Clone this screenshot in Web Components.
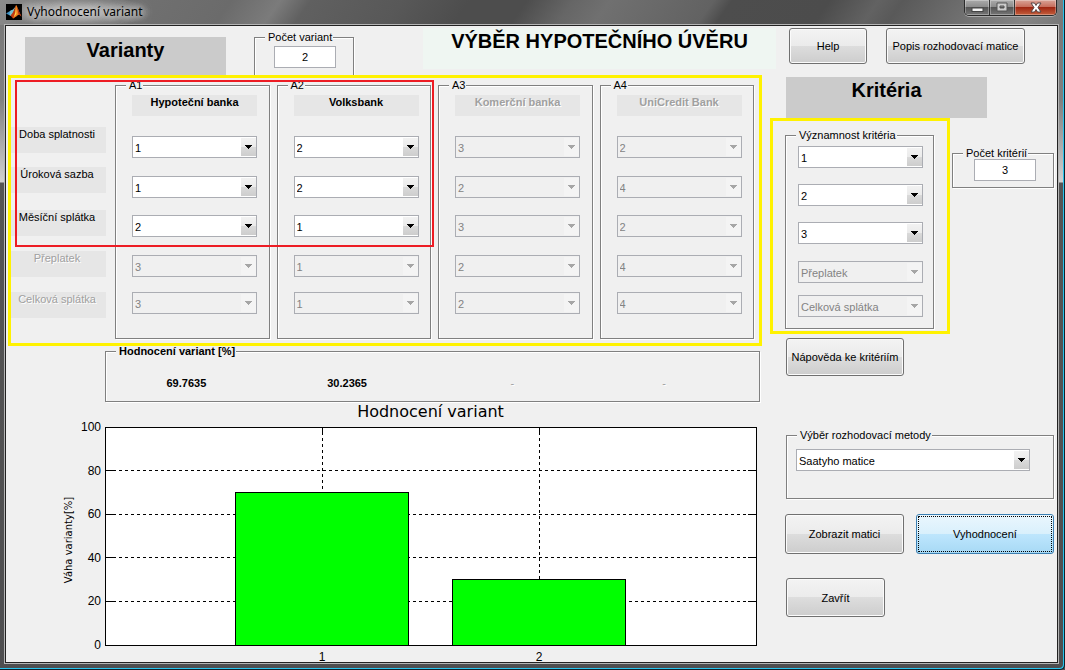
<!DOCTYPE html>
<html lang="cs">
<head>
<meta charset="utf-8">
<title>Vyhodnocení variant</title>
<style>
  html, body { margin: 0; }
  body { font: 11px/14px "Liberation Sans", Arial, sans-serif; color: #000; background: #555; }
</style>
</head>
<body>
<evaluation-app></evaluation-app>

<script>
const define = (name, html, setup) => {
  const template = document.createElement('template');
  template.innerHTML = html;
  customElements.define(name, class extends HTMLElement {
    constructor() {
      super();
      this.attachShadow({ mode: 'open' }).append(template.content.cloneNode(true));
    }
    connectedCallback() {
      if (setup && !this.ready) { this.ready = true; setup(this, this.shadowRoot); }
    }
  });
};

/* Window frame with title bar and caption buttons */
define('app-window', `
<style>
  :host { display: flex; flex-direction: column; box-sizing: border-box; min-height: 100vh; position: relative;
    padding: 0 7px 7px 5px;
    background: linear-gradient(180deg, #777 0, #808080 100px, #d0d0d0 182px, #555 183px, #4e4e50 100%); }
  :host::after { content: ""; position: absolute; inset: 0; pointer-events: none;
    border: solid #10202a; border-width: 0 1px 1px 0; box-shadow: inset -1px -1px 0 #28c4ee; border-radius: 0 0 5px 0; }
  header { display: flex; align-items: flex-start; height: 25px; margin: 0 -7px 0 -5px; padding: 0 8px 0 6px;
    background:
      radial-gradient(ellipse 75px 16px at 78px 12px, rgba(255,255,255,.55), rgba(255,255,255,0) 100%),
      linear-gradient(125deg, #8c8c8c 0, #747474 60px, #6b6b6b 190px, #7b7b7b 230px, #606060 255px, #585858 330px,
        #4d4d4d 385px, #4d4d4d 432px, #666 470px, #707070 500px, #626262 585px, #4d4d4d 600px, #4c4c4c 680px, #626262 720px, #595959 740px, #858585 850px, #777 100%); }
  .logo { width: 16px; height: 16px; margin-top: 4px; }
  h1 { flex: 1; margin: 3px 0 0 5px; font: 12px/18px "Noto Sans", "Open Sans", sans-serif;
    text-shadow: 0 0 6px #ddd, 0 0 9px #ccc, 0 0 12px #bbb; }
  nav { display: flex; border: 1px solid #2b2b2b; border-top: 0; border-radius: 0 0 5px 5px; overflow: hidden; box-shadow: 0 1px 0 #aaa; }
  nav button { display: grid; place-items: center; width: 25px; height: 15px; padding: 0; border: 0; border-right: 1px solid #333;
    background: linear-gradient(#aaa, #8b8b8b 48%, #555 50%, #777); box-shadow: inset 0 0 0 1px rgba(255,255,255,.3); }
  nav button:last-child { width: 41px; border: 0; background: linear-gradient(#d9a397, #c66b59 48%, #a02713 50%, #c45f3c); }
  main { flex: 1; background: #f0f0f0; border: 1px solid #222; box-shadow: 0 0 0 1px #b5b5b5; position: relative; }
</style>
<header>
  <svg class="logo" viewBox="0 0 16 16" aria-hidden="true">
    <rect width="16" height="16"/>
    <path d="M0 9.5 4 7l2-1 2 2-3 4-2-1z" fill="#3d8fc4"/>
    <path d="M4 7l3-1.5L10 2 7 9l-2 3-1.500-1z" fill="#7ac0cc"/>
    <path d="M10 1C8.500 5 7.500 9 4.500 11.500L7 14.500c1.500-.5 2.500-3 4-2.500z" fill="#c03a12"/>
    <path d="M10 1c1 0 2.500 6 5.500 11.500-2-2-3-2.500-4.500-.5L7 14.500 9 9z" fill="#ee7a1c"/>
    <path d="M10 2l.5 8L8 13l1.500-5z" fill="#ffd24a"/>
    <path d="M11 3l4.500 9.500-3-2.500z" fill="#a82a10"/>
  </svg>
  <h1><slot name="title"></slot></h1>
  <nav>
    <button aria-label="Minimalizovat"><svg width="13" height="11"><rect x="1" y="6" width="11" height="3.500" fill="#f2f2f2" stroke="#444"/></svg></button>
    <button aria-label="Maximalizovat"><svg width="12" height="11"><path d="M1 1h10v8H1zM4 4v2h4V4z" fill="#ccc" fill-rule="evenodd" stroke="#555"/></svg></button>
    <button aria-label="Zavřít okno"><svg width="14" height="12"><path d="M2 1h3.500L7 3.500 8.500 1H12L9 5.500 12 10H8.500L7 7.500 5.500 10H2L5 5.500z" fill="#fff" stroke="#544"/></svg></button>
  </nav>
</header>
<main><slot></slot></main>`);

/* Etched group box */
define('group-box', `
<style>
  :host { display: flex; min-width: 0; }
  fieldset { flex: 1; min-width: 0; margin: 0 1px 1px 0; padding: 0 10px; border: 1px solid #808080;
    box-shadow: 1px 1px 0 #fff, inset 1px 1px 0 #fff; }
  :host([open]) fieldset { border-bottom: 0; margin-bottom: 0; }
  legend { padding: 0 1px 0 3px; line-height: 12px; background: #f0f0f0; white-space: nowrap; }
  :host([strong]) legend { font-weight: bold; }
</style>
<fieldset><legend></legend><slot></slot></fieldset>`,
(el, root) => { root.querySelector('legend').textContent = el.getAttribute('label'); });

/* Drop-down list */
define('drop-down', `
<style>
  :host { display: block; position: relative; height: 22px; }
  select { appearance: none; display: block; box-sizing: border-box; width: 100%; height: 22px; margin: 0; padding: 2px 18px 0 2px;
    border: 1px solid #abadb3; border-radius: 0; background: #fff; color: #000; font: inherit; opacity: 1; outline: 0; }
  select:disabled { background: #f0f0f0; color: #838383; }
  span { position: absolute; top: 2px; right: 1px; width: 15px; height: 18px; display: grid; place-items: center; pointer-events: none;
    background: linear-gradient(#f2f2f2, #ebebeb 50%, #dadada 50%, #cdcdcd); }
  svg { fill: #000; }
  select:disabled + span { background: #f4f4f4; }
  select:disabled + span svg { fill: #a6a6a6; }
</style>
<select></select><span><svg width="7" height="4" shape-rendering="crispEdges"><path d="M0 0h7v1H6v1H5v1H4v1H3V3H2V2H1V1H0z"/></svg></span>`,
(el, root) => {
  const select = root.querySelector('select');
  select.add(new Option(el.getAttribute('value')));
  select.setAttribute('aria-label', el.getAttribute('label'));
  select.disabled = el.hasAttribute('disabled');
});

define('count-field', `
<style>
  :host { display: block; width: 62px; }
  input { display: block; box-sizing: border-box; width: 100%; height: 22px; margin: 0; padding: 0; border: 1px solid #abadb3;
    background: #fff; text-align: center; font: inherit; color: inherit; outline: 0; }
</style>
<input type="text">`,
(el, root) => {
  const input = root.querySelector('input');
  input.value = el.getAttribute('value');
  input.setAttribute('aria-label', el.getAttribute('label'));
});

define('push-button', `
<style>
  :host { display: block; }
  button { display: block; width: 100%; height: 100%; padding: 0; border: 1px solid #707070; border-radius: 3px; font: inherit; color: #000;
    white-space: nowrap; background: linear-gradient(#f3f3f3, #ebebeb 50%, #dddddd 50%, #cdcdcd); box-shadow: inset 0 0 0 1px #fbfbfb; }
  :host([default]) button { border-color: #3c7fb1; background: linear-gradient(#eaf6fd, #d9f0fc 49%, #bee6fd 50%, #a7d9f5);
    box-shadow: none; outline: 1px dotted #000; outline-offset: -3px; }
</style>
<button type="button"><slot></slot></button>`);

define('heading-block', `
<style>
  :host { display: block; background: #cbcbcb; text-align: center; }
  :host([tint]) { background: #eff6f2; }
  h2 { margin: 0; font-size: 20px; line-height: 26px; }
</style>
<h2><slot></slot></h2>`);

define('static-text', `
<style>
  :host { display: block; background: #e6e6e6; text-align: center; white-space: nowrap; }
  :host([disabled]) { color: #a0a0a0; text-shadow: 1px 1px 0 #fff; }
  :host([strong]) { font-weight: bold; }
</style>
<slot></slot>`);

/* One variant: bank name and a rating for each criterion */
define('variant-group', `
<style>
  :host { display: flex; min-width: 0; }
  group-box { flex: 1; }
  .body { display: grid; width: 125px; padding: 4px 0 0 6px; }
  static-text { height: 21px; margin-bottom: 20px; }
  .ratings { display: grid; grid-template-rows: 40px 39px 40px 37px 22px; }
</style>
<group-box><div class="body"><static-text strong></static-text><div class="ratings"></div></div></group-box>`,
(el, root) => {
  const name = el.getAttribute('name');
  const off = el.hasAttribute('disabled');
  const text = root.querySelector('static-text');
  text.textContent = name;
  text.toggleAttribute('disabled', off);
  const criteria = ['Doba splatnosti', 'Úroková sazba', 'Měsíční splátka', 'Přeplatek', 'Celková splátka'];
  root.querySelector('.ratings').innerHTML = el.getAttribute('ratings').split(' ').map((value, i) =>
    `<drop-down value="${value}" label="${name}: ${criteria[i]}" ${off || i > 2 ? 'disabled' : ''}></drop-down>`).join('');
  const box = root.querySelector('group-box');
  const legend = box.shadowRoot.querySelector('legend');
  legend.textContent = el.getAttribute('label');
});

/* Bar chart; horizontal positions are percentages of the plot width */
define('bar-chart', `
<style>
  :host { display: block; }
  figure { margin: 0; }
  figcaption { height: 24px; font: 16px/18px "DejaVu Sans", sans-serif; text-align: center; }
  svg.plot { display: block; width: 100%; height: 218px; overflow: visible; }
  line, rect { stroke: #000; shape-rendering: crispEdges; }
  .grid { stroke-dasharray: 3 3; }
  .frame { fill: none; }
  .bar { fill: #0f0; }
  text { font: 12px "Liberation Sans", Arial, sans-serif; }
  .axis { font: 10px "DejaVu Sans", sans-serif; }
</style>
<figure><figcaption></figcaption><svg class="plot"></svg></figure>`,
(el, root) => {
  root.querySelector('figcaption').textContent = el.getAttribute('caption');
  const values = el.getAttribute('values').split(' ').map(Number);
  const centre = i => (i + 1) * 100 / (values.length + 1);
  const half = 40 / (values.length + 1);
  let out = '<rect width="100%" height="100%" fill="#fff"/>';
  for (const v of [0, 20, 40, 60, 80, 100]) {
    const y = 100 - v + '%';
    if (v % 100) out += `<line class="grid" x1="8" x2="100%" y1="${y}" y2="${y}"/><line x2="8" y1="${y}" y2="${y}"/>
      <svg x="100%" y="${y}" overflow="visible"><line x1="-8"/></svg>`;
    out += `<svg y="${y}" overflow="visible"><text x="-4" y="4" text-anchor="end">${v}</text></svg>`;
  }
  values.forEach((v, i) => {
    const x = centre(i) + '%';
    out += `<line class="grid" x1="${x}" x2="${x}" y1="11" y2="100%"/><line x1="${x}" x2="${x}" y2="8"/>
      <rect class="bar" x="${centre(i) - half}%" y="${100 - v}%" width="${2 * half}%" height="${v}%"/>
      <svg x="${x}" y="100%" overflow="visible"><text y="16" text-anchor="middle">${i + 1}</text></svg>`;
  });
  out += `<rect class="frame" width="100%" height="100%"/>
    <svg y="50%" overflow="visible"><text class="axis" transform="rotate(-90)" x="-4" y="-33" text-anchor="middle">${el.getAttribute('axis')}</text></svg>`;
  root.querySelector('svg').innerHTML = out;
});

define('evaluation-app', `
<style>
  :host { display: block; }
  .top { display: flex; align-items: flex-start; height: 49px; padding: 0 32px 0 19px; }
  .top .variants { width: 201px; height: 38px; margin-top: 11px; }
  .top group-box { width: 101px; height: 44px; margin: 5px 68px 0 28px; }
  .top group-box count-field { margin: 3px 0 0 9px; }
  .top .title { flex: 1; height: 41px; margin: 2px 13px 0 0; white-space: nowrap; }
  .top push-button { height: 36px; margin-top: 2px; }
  .help { width: 78px; margin-right: 19px; }
  .describe { width: 139px; }
  .columns { display: grid; grid-template-columns: 1fr 287px; }
  .marked { border: 3px solid #fff200; box-sizing: border-box; }
  .ratings { position: relative; display: grid; grid-template-columns: 95px 1fr; gap: 9px; height: 271px; margin: 0 8px 0 2px; padding: 1px 4px 3px 0; }
  .ratings::after { content: ""; position: absolute; left: 4px; top: 2px; width: calc(50% + 45px); height: 167px; box-sizing: border-box;
    border: 2px solid #ed1c24; pointer-events: none; }
  .names { display: grid; grid-template-rows: 40px 43px 41px 41px 26px; align-content: start; padding-top: 48px; }
  .names static-text { height: 26px; padding-right: 3px; }
  .groups { display: grid; grid-template-columns: repeat(4, minmax(0, 1fr)); gap: 6px; }
  .results { height: 58px; margin: -1px 9px 0 99px; }
  .results div { display: grid; grid-template-columns: 161fr 161fr 170fr 134fr; margin: 18px 18px 0 -10px; text-align: center; font-weight: bold; line-height: 16px; }
  .results .none { color: #a0a0a0; font-weight: normal; text-shadow: 1px 1px 0 #fff; }
  bar-chart { margin: 0 14px 16px 99px; }
  .criteria-title { width: 201px; height: 41px; margin: 2px 0 0 16px; }
  .criteria { display: flex; align-items: flex-start; gap: 2px; }
  .importance { width: 180px; height: 216px; padding: 8px 12px 1px; }
  .importance group-box { height: 201px; }
  .importance .list { display: grid; grid-template-rows: 38px 38px 39px 34px 22px; width: 125px; padding: 5px 0 0 2px; }
  .count { width: 103px; height: 42px; margin-top: 29px; }
  .count count-field { margin-left: 11px; }
  .hint { width: 118px; height: 38px; margin: 4px 0 0 16px; }
  .method { height: 71px; margin: 53px 2px 0 16px; }
  .method drop-down { margin: 8px 13px 0 -1px; }
  .actions { display: flex; justify-content: space-between; margin: 14px 3px 0 15px; }
  .actions push-button { width: 119px; height: 40px; }
  .actions push-button[default] { width: 138px; }
  .close { width: 99px; height: 39px; margin: 24px 0 0 16px; }
</style>
<app-window>
  <span slot="title">Vyhodnocení variant</span>
  <div class="top">
    <heading-block class="variants">Varianty</heading-block>
    <group-box label="Počet variant" open><count-field value="2" label="Počet variant"></count-field></group-box>
    <heading-block class="title" tint>VÝBĚR HYPOTEČNÍHO ÚVĚRU</heading-block>
    <push-button class="help">Help</push-button>
    <push-button class="describe">Popis rozhodovací matice</push-button>
  </div>
  <div class="columns">
    <section>
      <div class="ratings marked">
        <div class="names">
          <static-text>Doba splatnosti</static-text>
          <static-text>Úroková sazba</static-text>
          <static-text>Měsíční splátka</static-text>
          <static-text disabled>Přeplatek</static-text>
          <static-text disabled>Celková splátka</static-text>
        </div>
        <div class="groups">
          <variant-group label="A1" name="Hypoteční banka" ratings="1 1 2 3 3"></variant-group>
          <variant-group label="A2" name="Volksbank" ratings="2 2 1 1 1"></variant-group>
          <variant-group label="A3" name="Komerční banka" ratings="3 2 3 2 2" disabled></variant-group>
          <variant-group label="A4" name="UniCredit Bank" ratings="2 4 2 4 4" disabled></variant-group>
        </div>
      </div>
      <group-box class="results" label="Hodnocení variant [%]" strong>
        <div><span>69.7635</span><span>30.2365</span><span class="none">-</span><span class="none">-</span></div>
      </group-box>
      <bar-chart caption="Hodnocení variant" axis="Váha varianty[%]" values="69.7635 30.2365"></bar-chart>
    </section>
    <section>
      <heading-block class="criteria-title">Kritéria</heading-block>
      <div class="criteria">
        <div class="importance marked">
          <group-box label="Významnost kritéria">
            <div class="list">
              <drop-down value="1" label="Významnost kritéria 1"></drop-down>
              <drop-down value="2" label="Významnost kritéria 2"></drop-down>
              <drop-down value="3" label="Významnost kritéria 3"></drop-down>
              <drop-down value="Přeplatek" label="Významnost kritéria 4" disabled></drop-down>
              <drop-down value="Celková splátka" label="Významnost kritéria 5" disabled></drop-down>
            </div>
          </group-box>
        </div>
        <group-box class="count" label="Počet kritérií"><count-field value="3" label="Počet kritérií"></count-field></group-box>
      </div>
      <push-button class="hint">Nápověda ke kritériím</push-button>
      <group-box class="method" label="Výběr rozhodovací metody">
        <drop-down value="Saatyho matice" label="Výběr rozhodovací metody"></drop-down>
      </group-box>
      <div class="actions">
        <push-button>Zobrazit matici</push-button>
        <push-button default>Vyhodnocení</push-button>
      </div>
      <push-button class="close">Zavřít</push-button>
    </section>
  </div>
</app-window>`);
</script>
</body>
</html>
